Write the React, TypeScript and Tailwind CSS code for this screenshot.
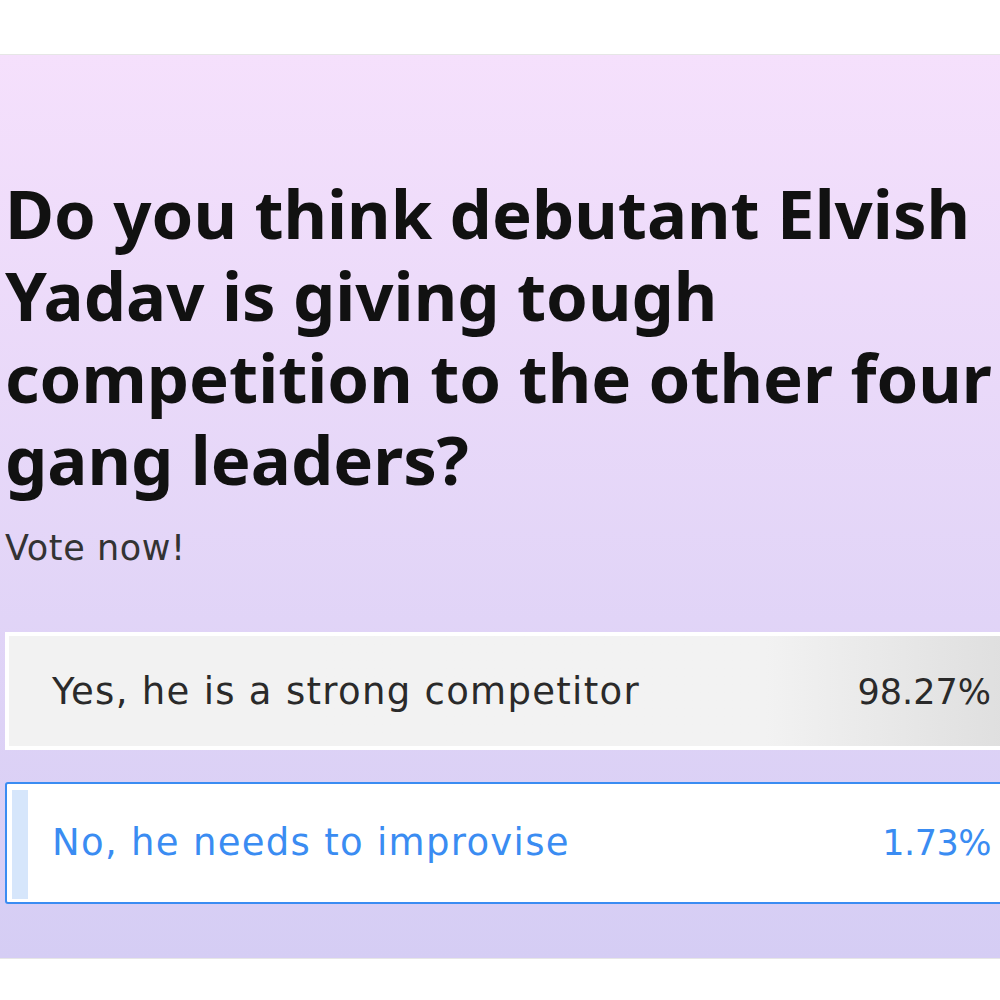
export default function App() {
  return (
    <div className="w-[1000px] h-[1000px] overflow-hidden bg-white" style={{ fontFamily: '"Noto Sans", sans-serif' }}>
      <div className="h-[54px]" />
      <div className="w-[1040px] h-[905px] border-t border-b border-[#e6e6e6] bg-gradient-to-b from-[#f5e0fc] to-[#d5cdf4] pl-[5px] pt-[117px]">
        <h1 className="text-[67px] leading-[82px] font-bold text-[#111111] w-[1000px]">
          Do you think debutant Elvish Yadav is giving tough competition to the other four gang leaders?
        </h1>
        <p className="mt-[28px] text-[35px] leading-[40px] tracking-[0.6px] text-[#333333] font-['DejaVu_Sans',sans-serif]">Vote now!</p>

        <div className="mt-[64px] flex flex-col gap-[32px] w-[1035px] font-['DejaVu_Sans',sans-serif]">
          <div className="h-[118px] border-4 border-white bg-[#f1f1f1] relative">
            <div className="absolute inset-y-0 left-0 w-[98.27%] bg-gradient-to-r from-[#f2f2f2] from-75% to-[#dedede]" />
            <div className="relative h-full flex items-center justify-between pl-[43px] pr-[45px] pt-[2px] text-[#2a2a2a]">
              <span className="text-[37px] tracking-[1.3px]">Yes, he is a strong competitor</span>
              <span className="text-[35px]">98.27%</span>
            </div>
          </div>
          <div className="h-[122px] border-2 border-[#3a8cf2] rounded-[3px] bg-white relative">
            <div className="absolute top-[6px] bottom-[3px] left-[5px] w-[16px] bg-[#d6e6fb]" />
            <div className="relative h-full flex items-center justify-between pl-[45px] pr-[47px] text-[#3a8cf2]">
              <span className="text-[37px] tracking-[1.3px]">No, he needs to improvise</span>
              <span className="text-[35px] tracking-[-0.5px]">1.73%</span>
            </div>
          </div>
        </div>
      </div>
    </div>
  );
}
